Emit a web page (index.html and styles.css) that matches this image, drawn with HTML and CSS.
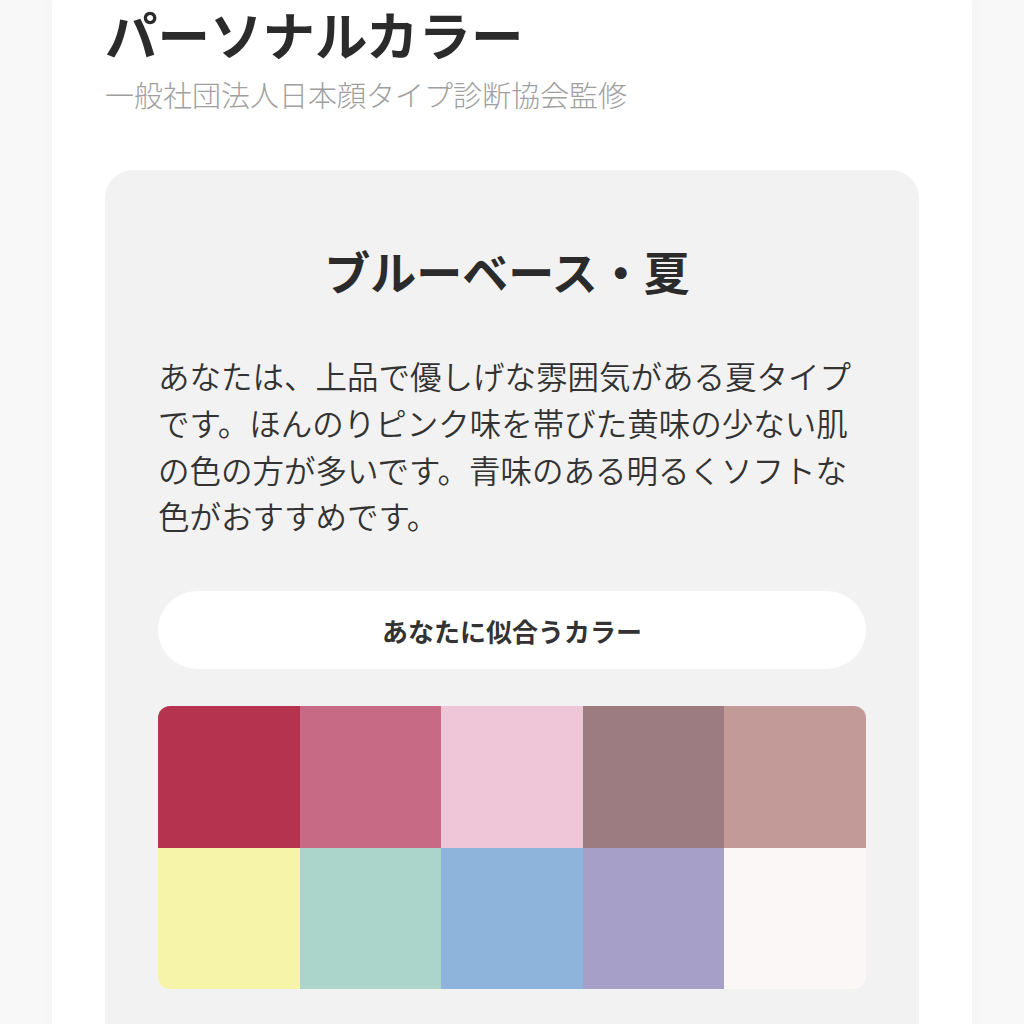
FILE: index.html
```html
<!DOCTYPE html>
<html lang="ja">
<head>
<meta charset="utf-8">
<title>パーソナルカラー</title>
<link rel="stylesheet" href="styles.css">
</head>
<body>
<main class="page">
  <h1 class="title">パーソナルカラー</h1>
  <p class="subtitle">一般社団法人日本顔タイプ診断協会監修</p>
  <section class="card">
    <h2 class="card-title">ブルーベース・夏</h2>
    <p class="desc">あなたは、上品で優しげな雰囲気がある夏タイプです。ほんのりピンク味を帯びた黄味の少ない肌の色の方が多いです。青味のある明るくソフトな色がおすすめです。</p>
    <div class="pill">あなたに似合うカラー</div>
    <div class="palette">
      <div class="sw c1"></div>
      <div class="sw c2"></div>
      <div class="sw c3"></div>
      <div class="sw c4"></div>
      <div class="sw c5"></div>
      <div class="sw c6"></div>
      <div class="sw c7"></div>
      <div class="sw c8"></div>
      <div class="sw c9"></div>
      <div class="sw c10"></div>
    </div>
  </section>
</main>
</body>
</html>
```
FILE: styles.css
```css
* { box-sizing: border-box; }
html, body {
  margin: 0;
  padding: 0;
}
body {
  background: #f8f8f8;
  font-family: "Noto Sans CJK JP", "Noto Sans", sans-serif;
  color: #333;
  overflow: hidden;
}
.page {
  width: 920px;
  margin: 0 auto;
  min-height: 1100px;
  background: #fff;
  padding: 0 53px;
  box-shadow: 0 0 16px rgba(0, 0, 0, 0.04);
}
.title {
  margin: 0;
  font-size: 52.5px;
  line-height: 66px;
  font-weight: 700;
  color: #2b2b2b;
}
.subtitle {
  margin: 8px 0 0;
  font-size: 29px;
  line-height: 40px;
  font-weight: 300;
  color: #a0a0a0;
}
.card {
  margin-top: 56px;
  background: #f2f2f2;
  border-radius: 28px;
  padding: 70px 53px 60px;
}
.card-title {
  margin: 0;
  padding-right: 10px;
  text-align: center;
  font-size: 46px;
  line-height: 60px;
  font-weight: 700;
  color: #2b2b2b;
}
.desc {
  margin: 52px 0 0;
  font-size: 31.5px;
  line-height: 46.8px;
  font-weight: 350;
  color: #333;
}
.pill {
  margin-top: 52px;
  height: 78px;
  border-radius: 39px;
  background: #fff;
  display: flex;
  align-items: center;
  justify-content: center;
  font-size: 26px;
  font-weight: 700;
  color: #333;
}
.palette {
  margin-top: 37px;
  display: grid;
  grid-template-columns: repeat(5, 1fr);
  border-radius: 12px;
  overflow: hidden;
}
.sw { aspect-ratio: 1 / 1; }
.c1 { background: #b5334f; }
.c2 { background: #c66a85; }
.c3 { background: #efc5d8; }
.c4 { background: #9c7c81; }
.c5 { background: #c29b98; }
.c6 { background: #f6f4a9; }
.c7 { background: #abd5cb; }
.c8 { background: #8fb4dc; }
.c9 { background: #a69fc8; }
.c10 { background: #fbf7f6; }
```
